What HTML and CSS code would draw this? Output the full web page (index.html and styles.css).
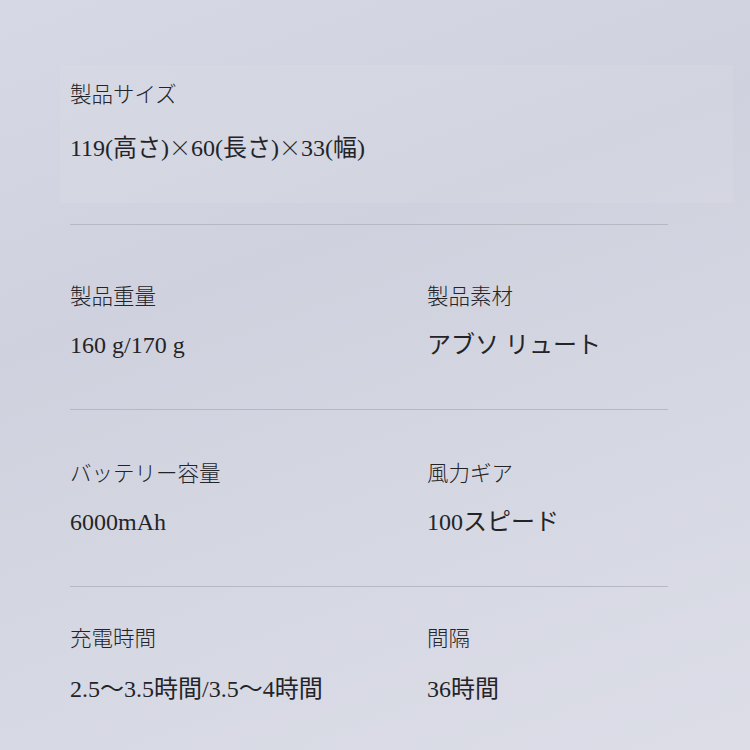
FILE: index.html
```html
<!DOCTYPE html>
<html lang="ja">
<head>
<meta charset="utf-8">
<link rel="stylesheet" href="styles.css">
</head>
<body>
<main class="sheet">
  <section class="row first">
    <div class="cell">
      <div class="label">製品サイズ</div>
      <div class="value">119(高さ)<span class="times">×</span>60(長さ)<span class="times">×</span>33(幅)</div>
    </div>
  </section>
  <section class="row second">
    <div class="cell">
      <div class="label">製品重量</div>
      <div class="value">160 g/170 g</div>
    </div>
    <div class="cell">
      <div class="label">製品素材</div>
      <div class="value">アブソ リュート</div>
    </div>
  </section>
  <section class="row third">
    <div class="cell">
      <div class="label">バッテリー容量</div>
      <div class="value">6000mAh</div>
    </div>
    <div class="cell">
      <div class="label">風力ギア</div>
      <div class="value">100スピード</div>
    </div>
  </section>
  <section class="row last">
    <div class="cell">
      <div class="label">充電時間</div>
      <div class="value">2.5～3.5時間/3.5～4時間</div>
    </div>
    <div class="cell">
      <div class="label">間隔</div>
      <div class="value">36時間</div>
    </div>
  </section>
</main>
</body>
</html>
```
FILE: styles.css
```css
html, body {
  margin: 0;
  padding: 0;
}
body {
  width: 750px;
  height: 750px;
  overflow: hidden;
  background: linear-gradient(160deg, #d6d9e5 0%, #cfd2de 35%, #d6d8e3 70%, #dcdde7 100%);
  font-family: "Liberation Serif", "Noto Sans CJK JP", serif;
  color: #242428;
}
.sheet {
  padding: 0 82px 0 70px;
  position: relative;
}
.row {
  display: grid;
  grid-template-columns: 357px 1fr;
  border-bottom: 1px solid #b6b8c4;
}
.row.first {
  display: block;
  padding: 80px 0 61px;
  position: relative;
}
.row.first::before {
  content: "";
  position: absolute;
  left: -10px;
  right: -65px;
  top: 65px;
  bottom: 21px;
  background: rgba(224, 227, 236, 0.2);
  z-index: -1;
}
.row.second {
  padding: 57px 0 49px;
}
.row.third {
  padding: 49px 0 49px;
}
.row.last {
  border-bottom: none;
  padding: 37px 0 0;
}
.label {
  font-size: 21.5px;
  line-height: 30px;
  font-weight: 300;
}
.value {
  font-size: 24px;
  line-height: 30px;
  margin-top: 18px;
}
.row.first .value {
  margin-top: 23px;
}
.row.last .value {
  margin-top: 20px;
}
.times {
  font-family: "Noto Sans CJK JP", sans-serif;
  font-weight: 300;
  font-size: 22px;
  line-height: 0;
}
```
